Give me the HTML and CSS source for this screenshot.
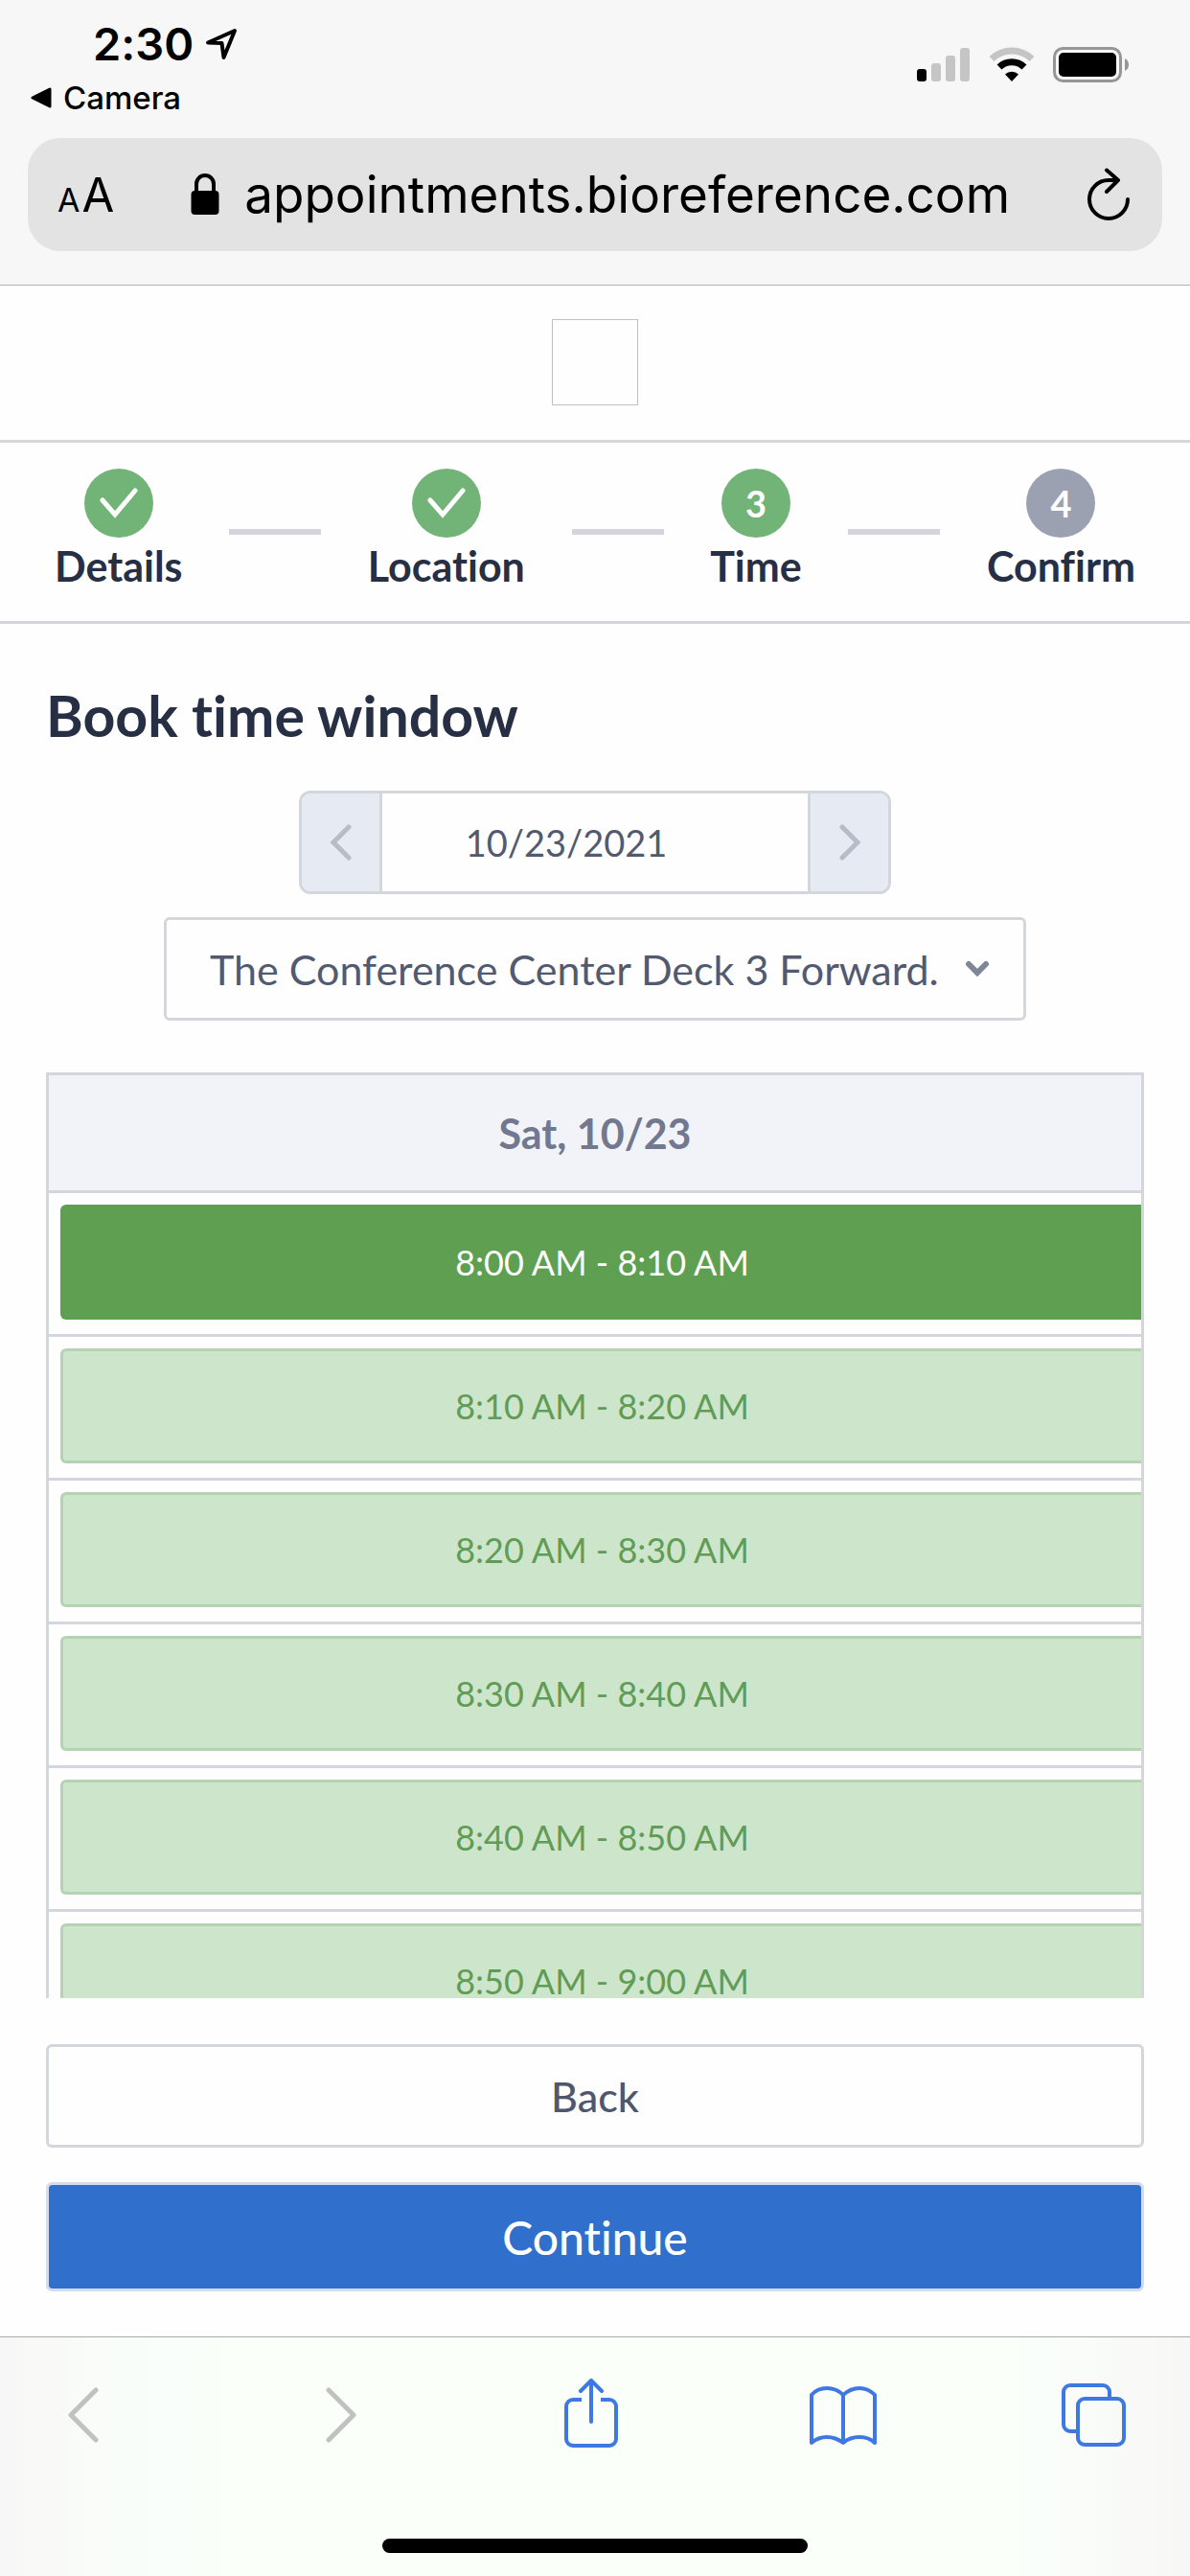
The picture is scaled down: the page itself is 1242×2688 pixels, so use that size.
FILE: index.html
```html
<!DOCTYPE html>
<html lang="en">
<head>
<meta charset="utf-8">
<meta name="viewport" content="width=device-width, initial-scale=1">
<title>Book time window</title>
<link rel="stylesheet" href="styles.css">
</head>
<body>
<div class="browser-top">
  <div class="status">
    <div class="status-left">
      <div class="clock">
        <span>2:30</span>
        <svg viewBox="0 0 34 34" width="34" height="34" aria-hidden="true"><path d="M31 3 3 15.500 17.500 16 19.500 31Z" fill="none" stroke="#000" stroke-width="4" stroke-linejoin="round"/></svg>
      </div>
      <a class="return-link" href="#camera">
        <svg viewBox="0 0 22 22" width="22" height="22" aria-hidden="true"><path d="M2 11 20 2V20Z" fill="#000" stroke="#000" stroke-width="3" stroke-linejoin="round"/></svg>
        <span>Camera</span>
      </a>
    </div>
    <div class="status-icons">
      <svg viewBox="0 0 56 36" width="56" height="36" aria-label="Signal"><rect x="0" y="23" width="10" height="13" rx="3"/><g fill="#c5c5c5"><rect x="15" y="17" width="10" height="19" rx="3"/><rect x="30" y="9" width="10" height="27" rx="3"/><rect x="45" y="1" width="10" height="35" rx="3"/></g></svg>
      <svg viewBox="0 0 48 36" width="48" height="36" aria-label="Wi-Fi"><path d="M3 12.500A30 30 0 0 1 45 12.500" fill="none" stroke="#c5c5c5" stroke-width="7"/><path d="M11 21A18.500 18.500 0 0 1 37 21" fill="none" stroke="#000" stroke-width="7"/><path d="M24 36 17 28.500A10 10 0 0 1 31 28.500Z"/></svg>
      <svg viewBox="0 0 80 38" width="80" height="38" aria-label="Battery"><rect x="1.500" y="1.500" width="69" height="34" rx="9" fill="none" stroke="#969696" stroke-width="3"/><rect x="6" y="6" width="60" height="25" rx="5"/><path d="M75 12Q79 14 79 18.500T75 25Z" fill="#969696"/></svg>
    </div>
  </div>
  <div class="address">
    <button class="text-size" type="button" aria-label="Text size"><span class="small-a">A</span><span class="large-a">A</span></button>
    <div class="site">
      <svg viewBox="0 0 30 44" width="30" height="44" aria-hidden="true"><path d="M6 20V11a9 9 0 0 1 18 0v9" fill="none" stroke="#000" stroke-width="4"/><rect x="0.500" y="18" width="29" height="25" rx="4"/></svg>
      <span>appointments.bioreference.com</span>
    </div>
    <button class="icon-button" type="button" aria-label="Reload">
      <svg viewBox="0 0 46 56" width="46" height="56"><path d="M43 33A20 20 0 1 1 23 13H32M21 2.500 33 13 21 25" fill="none" stroke="#000" stroke-width="4" stroke-linecap="round" stroke-linejoin="round"/></svg>
    </button>
  </div>
</div>

<header class="brand"><div class="brand-logo"></div></header>

<ol class="steps">
  <li class="step"><span class="badge"><svg viewBox="0 0 40 34" width="40" height="34" aria-hidden="true"><path d="M3 14 16 29 37 4" fill="none" stroke="#fff" stroke-width="5" stroke-linecap="round"/></svg></span><span>Details</span></li>
  <li class="step-line" aria-hidden="true"></li>
  <li class="step"><span class="badge"><svg viewBox="0 0 40 34" width="40" height="34" aria-hidden="true"><path d="M3 14 16 29 37 4" fill="none" stroke="#fff" stroke-width="5" stroke-linecap="round"/></svg></span><span>Location</span></li>
  <li class="step-line" aria-hidden="true"></li>
  <li class="step" aria-current="step"><span class="badge">3</span><span>Time</span></li>
  <li class="step-line" aria-hidden="true"></li>
  <li class="step"><span class="badge badge-idle">4</span><span>Confirm</span></li>
</ol>

<main class="booking">
  <h1 class="title">Book time window</h1>
  <div class="filters">
    <div class="date-picker">
      <button class="date-step" type="button" aria-label="Previous day"><svg viewBox="0 0 24 38" width="24" height="38"><path d="M20 3 4 19 20 35" fill="none" stroke="#b7bcc6" stroke-width="5" stroke-linecap="round"/></svg></button>
      <input class="date-field" type="text" value="10/23/2021" aria-label="Date">
      <button class="date-step" type="button" aria-label="Next day"><svg viewBox="0 0 24 38" width="24" height="38"><path d="M4 3 20 19 4 35" fill="none" stroke="#b7bcc6" stroke-width="5" stroke-linecap="round"/></svg></button>
    </div>
    <div class="place">
      <select class="place-select" aria-label="Location"><option>The Conference Center Deck 3 Forward.</option></select>
      <svg class="place-arrow" viewBox="0 0 26 18" width="26" height="18" aria-hidden="true"><path d="M4 4 13 13 22 4" fill="none" stroke="#7f8698" stroke-width="6" stroke-linecap="round"/></svg>
    </div>
  </div>
  <div class="schedule-scroll">
    <table class="schedule">
      <thead><tr><th scope="col">Sat, 10/23</th></tr></thead>
      <tbody>
        <tr><td><button class="slot slot-selected" type="button" aria-pressed="true">8:00 AM - 8:10 AM</button></td></tr>
        <tr><td><button class="slot" type="button">8:10 AM - 8:20 AM</button></td></tr>
        <tr><td><button class="slot" type="button">8:20 AM - 8:30 AM</button></td></tr>
        <tr><td><button class="slot" type="button">8:30 AM - 8:40 AM</button></td></tr>
        <tr><td><button class="slot" type="button">8:40 AM - 8:50 AM</button></td></tr>
        <tr><td><button class="slot" type="button">8:50 AM - 9:00 AM</button></td></tr>
      </tbody>
    </table>
  </div>
  <div class="actions">
    <button class="action action-back" type="button">Back</button>
    <button class="action action-continue" type="button">Continue</button>
  </div>
</main>

<footer class="browser-bottom">
  <nav class="toolbar" aria-label="Browser">
    <button class="icon-button" type="button" aria-label="Back"><svg viewBox="0 0 72 72" width="72" height="72"><path d="M31 12 5 38 31 64" fill="none" stroke="#c0c1c0" stroke-width="5" stroke-linecap="round" stroke-linejoin="round"/></svg></button>
    <button class="icon-button" type="button" aria-label="Forward"><svg viewBox="0 0 72 72" width="72" height="72"><path d="M15 12 41 38 15 64" fill="none" stroke="#c0c1c0" stroke-width="5" stroke-linecap="round" stroke-linejoin="round"/></svg></button>
    <button class="icon-button" type="button" aria-label="Share"><svg viewBox="0 0 72 72" width="72" height="72"><g fill="none" stroke="#3d78e3" stroke-width="4"><path d="M20 22H11a7 7 0 0 0-7 7V63a7 7 0 0 0 7 7H49a7 7 0 0 0 7-7V29a7 7 0 0 0-7-7H40"/><path d="M30 45V2M19 13 30 2 41 13" stroke-linecap="round" stroke-linejoin="round"/></g></svg></button>
    <button class="icon-button" type="button" aria-label="Bookmarks"><svg viewBox="0 0 72 72" width="72" height="72"><path d="M34 67V17Q27 10 17 10T1 17V67Q8 61 17 61T34 67Q41 61 51 61T67 67V17Q60 10 51 10T34 17" transform="translate(1 0)" fill="none" stroke="#3d78e3" stroke-width="4" stroke-linejoin="round"/></svg></button>
    <button class="icon-button" type="button" aria-label="Tabs"><svg viewBox="0 0 72 72" width="72" height="72"><g fill="none" stroke="#3d78e3" stroke-width="4"><path d="M19 55H13a7 7 0 0 1-7-7V14a7 7 0 0 1 7-7H47a7 7 0 0 1 7 7V21"/><rect x="21" y="21" width="48" height="48" rx="7"/></g></svg></button>
  </nav>
  <div class="home-bar"></div>
</footer>
</body>
</html>
```

FILE: styles.css
```css
* { box-sizing: border-box; }

body {
  margin: 0;
  height: 100vh;
  display: flex;
  flex-direction: column;
  background: #fefefe;
  color: #272f45;
  font-family: Lato, "Open Sans", sans-serif;
  font-size: 43px;
  font-variant-ligatures: none;
}

button, input, select {
  margin: 0;
  padding: 0;
  border: 0;
  background: none;
  color: inherit;
  font: inherit;
  font-variant-ligatures: none;
}

svg { display: block; }

.icon-button { display: block; }

/* Browser chrome, top */
.browser-top {
  padding: 17px 29px 35px;
  background: #f7f7f7;
  border-bottom: 1px solid #b2b2b2;
  color: #000;
  font-family: Inter, sans-serif;
}

.status {
  display: flex;
  justify-content: space-between;
  align-items: flex-start;
  height: 127px;
}

.clock {
  display: flex;
  align-items: center;
  gap: 12px;
  padding-left: 68px;
  font-size: 47px;
  font-weight: 600;
  line-height: 58px;
}

.return-link {
  display: flex;
  align-items: center;
  gap: 12px;
  padding-left: 3px;
  color: #000;
  font-size: 33px;
  font-weight: 500;
  line-height: 54px;
  text-decoration: none;
}

.status-icons {
  display: flex;
  gap: 19px;
  padding: 32px 34px 0 0;
}

.address {
  display: flex;
  align-items: center;
  justify-content: space-between;
  height: 118px;
  padding: 0 33px 0 31px;
  border-radius: 34px;
  background: #e3e3e4;
}

.text-size {
  display: flex;
  align-items: baseline;
  gap: 2px;
}

.small-a { font-size: 34px; }
.large-a { font-size: 49px; }

.site {
  display: flex;
  align-items: center;
  gap: 26px;
  font-size: 53px;
}

/* Site header */
.brand {
  display: flex;
  justify-content: center;
  padding: 35px 0 36px;
  border-bottom: 3px solid #d5d8da;
}

.brand-logo {
  width: 90px;
  height: 90px;
  border: 1px solid #c0c0c0;
}

.steps {
  display: flex;
  justify-content: space-between;
  margin: 0;
  padding: 27px 57px 33px;
  border-bottom: 3px solid #d3d5dc;
  list-style: none;
}

.step {
  display: flex;
  flex-direction: column;
  align-items: center;
  gap: 6px;
  font-size: 43px;
  font-weight: 700;
  line-height: 48px;
}

.badge {
  display: flex;
  align-items: center;
  justify-content: center;
  width: 72px;
  height: 72px;
  border-radius: 50%;
  background: #72b377;
  color: #fff;
  font-size: 38px;
}

.badge-idle { background: #9ca1b1; }

.step-line {
  width: 96px;
  height: 6px;
  margin-top: 63px;
  background: #d3d4dd;
}

/* Booking form */
.booking {
  flex: 1;
  min-height: 0;
  display: flex;
  flex-direction: column;
  padding: 60px 48px 47px;
}

.title {
  margin: 0;
  font-size: 59px;
  font-weight: 700;
  line-height: 72px;
}

.filters {
  display: flex;
  flex-direction: column;
  align-items: center;
  gap: 24px;
  margin: 42px 0 54px;
  color: #525a70;
}

.date-picker {
  display: flex;
  width: 618px;
  height: 108px;
  border: 3px solid #d3d6db;
  border-radius: 12px;
  overflow: hidden;
}

.date-step {
  display: flex;
  align-items: center;
  justify-content: center;
  width: 81px;
  background: #e6eaf2;
}

.date-field {
  flex: 1;
  min-width: 0;
  padding-right: 60px;
  border: solid #d3d6db;
  border-width: 0 3px;
  font-size: 38px;
  text-align: center;
}

.place {
  position: relative;
  width: 900px;
  max-width: 100%;
}

.place-select {
  display: block;
  width: 100%;
  height: 108px;
  padding: 0 80px 0 45px;
  border: 3px solid #d3d6db;
  border-radius: 6px;
  appearance: none;
}

.place-arrow {
  position: absolute;
  top: 45px;
  right: 38px;
  pointer-events: none;
}

.schedule-scroll {
  flex: 1;
  min-height: 300px;
  overflow-y: auto;
  scrollbar-width: none;
}

.schedule {
  width: 100%;
  border: 3px solid #d3d6db;
  border-spacing: 0;
}

.schedule th {
  height: 123px;
  padding: 0;
  border-bottom: 3px solid #d3d6db;
  background: #f2f3f8;
  color: #71788f;
  font-size: 43px;
  font-weight: 700;
}

.schedule td {
  padding: 12px 0 15px 12px;
  border-bottom: 3px solid #d3d6db;
}

.slot {
  display: block;
  width: 100%;
  height: 120px;
  border: 3px solid #b5d3b3;
  border-right: 0;
  border-radius: 6px 0 0 6px;
  background: #cde6cb;
  color: #619c56;
  font-size: 36px;
}

.slot-selected {
  border-color: #5e9f51;
  background: #5e9f51;
  color: #fff;
}

.actions {
  display: flex;
  flex-direction: column;
  gap: 36px;
  padding-top: 48px;
}

.action {
  height: 108px;
  border: 3px solid #d3d6db;
  border-radius: 6px;
  font-weight: 500;
}

.action-back { color: #4f576e; }

.action-continue {
  height: 114px;
  border-color: #d3ddee;
  background: #306fcb;
  background-clip: padding-box;
  color: #fff;
  font-size: 48px;
}

/* Browser chrome, bottom */
.browser-bottom {
  border-top: 1px solid #a9abaa;
  background: linear-gradient(90deg, #f8f7f7, #f9fdf9 10%, #fafffa 20%, #fafffa 85%, #f8f7f7);
}

.toolbar {
  display: flex;
  justify-content: space-between;
  padding: 43px 66px 95px 69px;
}

.home-bar {
  width: 444px;
  max-width: 60%;
  height: 15px;
  margin: 0 auto 24px;
  border-radius: 8px;
  background: #000;
}
```
